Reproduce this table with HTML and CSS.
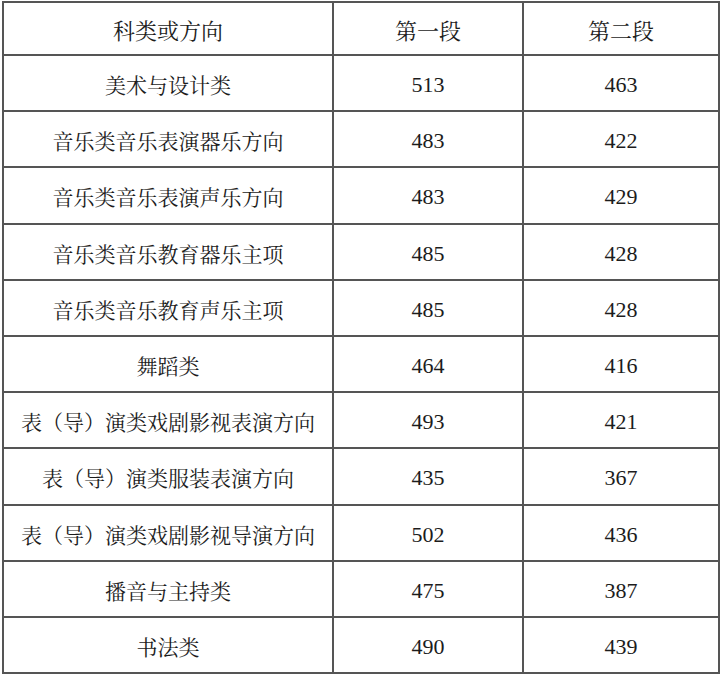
FILE: index.html
```html
<!DOCTYPE html>
<html lang="zh-CN">
<head>
<meta charset="utf-8">
<title>分数线</title>
<link rel="stylesheet" href="styles.css">
</head>
<body>
<table class="scores">
  <colgroup>
    <col class="c1">
    <col class="c2">
    <col class="c3">
  </colgroup>
  <thead>
    <tr class="head"><th>科类或方向</th><th>第一段</th><th>第二段</th></tr>
  </thead>
  <tbody>
    <tr><td>美术与设计类</td><td class="num">513</td><td class="num">463</td></tr>
    <tr><td>音乐类音乐表演器乐方向</td><td class="num">483</td><td class="num">422</td></tr>
    <tr><td>音乐类音乐表演声乐方向</td><td class="num">483</td><td class="num">429</td></tr>
    <tr><td>音乐类音乐教育器乐主项</td><td class="num">485</td><td class="num">428</td></tr>
    <tr><td>音乐类音乐教育声乐主项</td><td class="num">485</td><td class="num">428</td></tr>
    <tr><td>舞蹈类</td><td class="num">464</td><td class="num">416</td></tr>
    <tr><td>表（导）演类戏剧影视表演方向</td><td class="num">493</td><td class="num">421</td></tr>
    <tr><td>表（导）演类服装表演方向</td><td class="num">435</td><td class="num">367</td></tr>
    <tr><td>表（导）演类戏剧影视导演方向</td><td class="num">502</td><td class="num">436</td></tr>
    <tr><td>播音与主持类</td><td class="num">475</td><td class="num">387</td></tr>
    <tr><td>书法类</td><td class="num">490</td><td class="num">439</td></tr>
  </tbody>
</table>
</body>
</html>
```
FILE: styles.css
```css
html, body {
  margin: 0;
  padding: 0;
  background: #ffffff;
}
body {
  padding: 1px 0 0 2px;
}
.scores {
  border-collapse: collapse;
  table-layout: fixed;
  width: 716px;
  font-family: "Noto Serif CJK SC", "Noto Sans CJK SC", serif;
  color: #1c1c1c;
}
.c1 { width: 330px; }
.c2 { width: 190px; }
.c3 { width: 196px; }
.scores th,
.scores td {
  border: 2px solid #555555;
  text-align: center;
  vertical-align: middle;
  padding: 3px 0 0 0;
  font-size: 21px;
  font-weight: normal;
  line-height: 1;
}
.scores th {
  font-size: 22px;
}
.head {
  height: 53px;
}
.scores tbody tr {
  height: 56.2px;
}
.scores td.num {
  font-family: "Liberation Serif", "Times New Roman", serif;
  font-size: 22px;
  padding-top: 4px;
}
```
